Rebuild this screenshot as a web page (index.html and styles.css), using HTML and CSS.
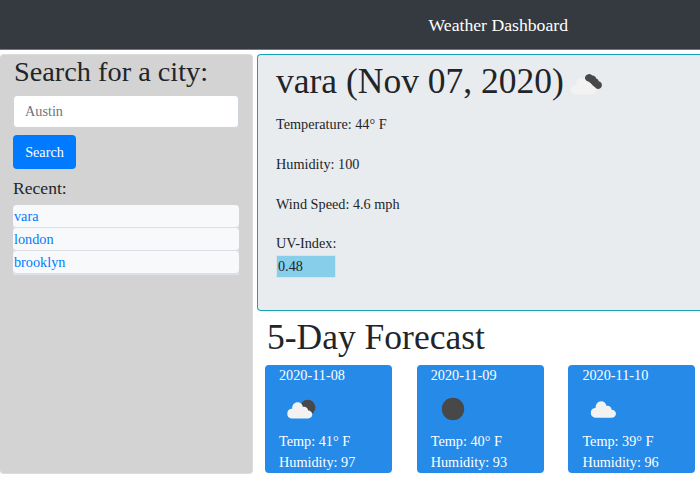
FILE: index.html
```html
<!DOCTYPE html>
<html lang="en">
<head>
<meta charset="utf-8">
<title>Weather Dashboard</title>
<link rel="stylesheet" href="styles.css">
</head>
<body>
<header class="navbar"><span>Weather Dashboard</span></header>
<main class="layout">
  <aside class="sidebar">
    <h2>Search for a city:</h2>
    <input class="city" type="text" placeholder="Austin" aria-label="City">
    <button class="search" type="button">Search</button>
    <h4>Recent:</h4>
    <ul class="recent">
      <li><a>vara</a></li>
      <li><a>london</a></li>
      <li><a>brooklyn</a></li>
    </ul>
  </aside>
  <div class="content">
    <section class="current">
      <h1><span>vara (Nov 07, 2020)</span>
        <svg class="now-icon" width="34" height="26" viewBox="0 0 34 26"><path d="M18.500 9.500c-2.500-.6-4-2.300-3.500-4.300a4.300 4.300 0 0 1 7.400-1.700c2.300.2 3.400 1.300 3.800 2.900 1.600.4 2.300 1.400 2.400 2.800 2.200.5 3.500 2.200 3.300 4.300-.3 2.800-3.200 4.300-5.700 3z" fill="#484848"/><path d="M5.500 22.500a4.700 4.700 0 0 1 0-9.700h.6C6 8.500 8.700 6 11.500 6c3.200 0 5.100 2.200 5.500 4.700 2.900-.7 5.200 1.200 5.200 3.900 2.500 0 4.300 1.700 4.300 4s-1.800 3.900-4.300 3.900z" fill="#f2f2f2"/></svg>
      </h1>
      <p>Temperature: 44° F</p>
      <p>Humidity: 100</p>
      <p>Wind Speed: 4.6 mph</p>
      <p class="uv-label">UV-Index:</p>
      <div class="uv">0.48</div>
    </section>
    <h1 class="forecast-title">5-Day Forecast</h1>
    <section class="forecast">
      <article class="day">
        <p>2020-11-08</p>
        <svg width="44" height="44" viewBox="0 0 44 44"><circle cx="28.700" cy="20.500" r="7.700" fill="#484848"/><path d="M12.500 31.500a4.900 4.900 0 0 1 0-9.700h.6c-.2-4 2.500-6.600 5.400-6.600 3 0 5 2 5.400 4.700 2.800-.7 5.200 1.300 5.200 3.700 2.500 0 4.200 1.700 4.200 4s-1.700 3.900-4.200 3.900z" fill="#f2f2f2"/></svg>
        <p>Temp: 41° F</p><p>Humidity: 97</p>
      </article>
      <article class="day">
        <p>2020-11-09</p>
        <svg width="44" height="44" viewBox="0 0 44 44"><circle cx="22" cy="22" r="11.200" fill="#484848"/></svg>
        <p>Temp: 40° F</p><p>Humidity: 93</p>
      </article>
      <article class="day">
        <p>2020-11-10</p>
        <svg width="44" height="44" viewBox="0 0 44 44"><path d="M13 30.700a4.900 4.900 0 0 1 0-9.700h.6c-.2-4 2.500-6.800 5.400-6.800 3 0 5 2 5.400 4.600 2.800-.7 5.200 1.300 5.200 3.900 2.500 0 4.400 1.700 4.400 4s-1.900 4-4.400 4z" fill="#f2f2f2"/></svg>
        <p>Temp: 39° F</p><p>Humidity: 96</p>
      </article>
    </section>
  </div>
</main>
</body>
</html>
```
FILE: styles.css
```css
* { box-sizing: border-box; }
body {
  margin: 0;
  background: #fff;
  color: #212529;
  font: 14.24px/21.5px "Liberation Serif", "Times New Roman", serif;
}
h1, h2, h4, p, ul { margin: 0; padding: 0; font-weight: 400; }
.navbar {
  height: 50px;
  padding-left: 428.5px;
  background: #343a40;
  border-bottom: 1px solid #73777b;
  color: #fff;
  font-size: 17.7px;
  line-height: 50px;
  white-space: nowrap;
}
.layout { display: flex; align-items: flex-start; gap: 4px; padding-top: 4px; }
.sidebar {
  flex: 0 0 253px;
  height: 420px;
  padding: 0 13px;
  background: #d3d3d3;
  border: 1px solid #dcdcdc;
  border-left: 0;
  border-radius: 4px;
}
.sidebar h2 { padding-left: 1px; font-size: 28.3px; line-height: 34px; margin-bottom: 6px; white-space: nowrap; }
.city {
  display: block;
  width: 226px;
  height: 33px;
  padding: 0 11px;
  border: 1px solid #ced4da;
  border-radius: 4px;
  font: inherit;
}
.city::placeholder { color: #6c757d; opacity: 1; }
.search {
  display: block;
  width: 63px;
  height: 34px;
  margin-top: 7px;
  padding: 1px 0 0;
  border: 0;
  border-radius: 4px;
  background: #007bff;
  color: #fff;
  font: inherit;
}
.sidebar h4 { margin-top: 9px; font-size: 17.6px; line-height: 21px; }
.recent { width: 226px; margin-top: 6px; list-style: none; border-bottom: 1px solid #dee2e6; background: #dcdfe5; border-radius: 4px 4px 0 0; }
.recent li {
  height: 22px;
  margin-bottom: 1px;
  padding-left: 1px;
  border-radius: 4px;
  background: #f8f9fa;
  color: #007bff;
  line-height: 23px;
}
.content { flex: 1; min-width: 0; }
.current {
  height: 257px;
  padding: 5px 18px;
  border: 1px solid #17a2b8;
  border-right: 0;
  border-radius: 4px 0 0 4px;
  background: #e9ecef;
}
h1 { font-size: 35.5px; line-height: 43px; white-space: nowrap; }
.current h1 { display: flex; height: 54px; }
.now-icon { margin: 12px 0 0 6px; }
.current p { margin-bottom: 18.3px; }
.current .uv-label { margin-bottom: 0; }
.uv {
  width: 60px;
  height: 23px;
  padding-left: 1px;
  border: 1px solid #dee2e6;
  background: #87ceeb;
}
.forecast-title { margin: 5px 0 6px 10px; }
.forecast { display: flex; gap: 24.7px; padding-left: 8px; }
.day {
  flex: 0 0 127px;
  height: 108px;
  padding-left: 14px;
  border-radius: 4px;
  background: #268be8;
  color: #fff;
}
.day svg { display: block; }
```
